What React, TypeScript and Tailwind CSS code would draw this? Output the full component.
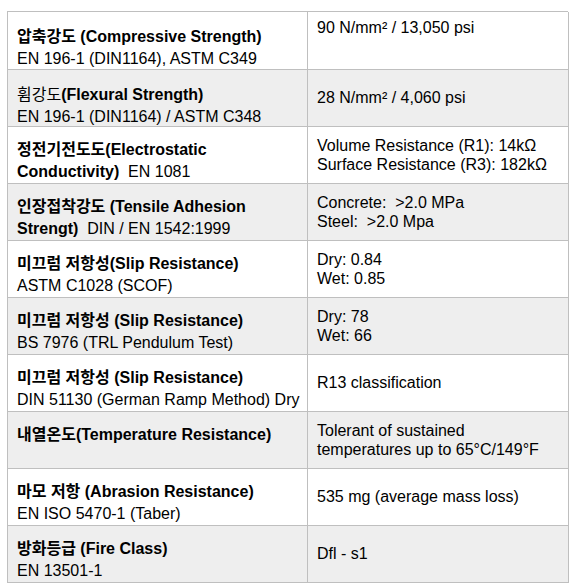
type Row = {
	ko: string;
	koBold: boolean;
	en: string;
	std: string;
	stdInline?: boolean;
	values: string[];
	top?: boolean;
	pad: string;
	height: string;
};

const rows: Row[] = [
	{
		ko: "압축강도 ",
		koBold: true,
		en: "(Compressive Strength)",
		std: "EN 196-1 (DIN1164), ASTM C349",
		values: ["90 N/mm² / 13,050 psi"],
		top: true,
		pad: "pt-[14px]",
		height: "h-[58px]",
	},
	{
		ko: "휨강도",
		koBold: false,
		en: "(Flexural Strength)",
		std: "EN 196-1 (DIN1164) / ASTM C348",
		values: ["28 N/mm² / 4,060 psi"],
		pad: "pt-[14px]",
		height: "h-[57px]",
	},
	{
		ko: "정전기전도도",
		koBold: true,
		en: "(Electrostatic Conductivity)",
		std: "\u00a0 EN 1081",
		stdInline: true,
		values: ["Volume Resistance (R1): 14kΩ", "Surface Resistance (R3): 182kΩ"],
		pad: "pt-3",
		height: "h-[57px]",
	},
	{
		ko: "인장접착강도 ",
		koBold: true,
		en: "(Tensile Adhesion Strengt)",
		std: "\u00a0 DIN / EN 1542:1999",
		stdInline: true,
		values: ["Concrete:  >2.0 MPa", "Steel:  >2.0 Mpa"],
		pad: "pt-3",
		height: "h-[57px]",
	},
	{
		ko: "미끄럼 저항성",
		koBold: true,
		en: "(Slip Resistance)",
		std: "ASTM C1028 (SCOF)",
		values: ["Dry: 0.84", "Wet: 0.85"],
		pad: "pt-3",
		height: "h-[57px]",
	},
	{
		ko: "미끄럼 저항성 ",
		koBold: true,
		en: "(Slip Resistance)",
		std: "BS 7976 (TRL Pendulum Test)",
		values: ["Dry: 78", "Wet: 66"],
		pad: "pt-3",
		height: "h-[57px]",
	},
	{
		ko: "미끄럼 저항성 ",
		koBold: true,
		en: "(Slip Resistance)",
		std: "DIN 51130 (German Ramp Method) Dry",
		values: ["R13 classification"],
		pad: "pt-3",
		height: "h-[57px]",
	},
	{
		ko: "내열온도",
		koBold: true,
		en: "(Temperature Resistance)",
		std: "",
		values: ["Tolerant of sustained", "temperatures up to 65°C/149°F"],
		pad: "pt-3",
		height: "h-[57px]",
	},
	{
		ko: "마모 저항 ",
		koBold: true,
		en: "(Abrasion Resistance)",
		std: "EN ISO 5470-1 (Taber)",
		values: ["535 mg (average mass loss)"],
		pad: "pt-3",
		height: "h-[57px]",
	},
	{
		ko: "방화등급 ",
		koBold: true,
		en: "(Fire Class)",
		std: "EN 13501-1",
		values: ["Dfl - s1"],
		pad: "pt-3",
		height: "h-[57px]",
	},
];

export default function App() {
	return (
		<div
			className="h-[588px] w-[578px] overflow-hidden bg-white pl-[7px] pt-[11px] text-[16px] text-black"
			style={{ fontFamily: '"Liberation Sans", Arial, "Noto Sans CJK KR", sans-serif' }}
		>
			<div className="grid w-[561px] grid-cols-[300px_261px] border-l border-t border-[#bfbfbf]">
				{rows.map((r, i) => (
					<div key={i} className={`contents ${i % 2 === 1 ? "[&>div]:bg-[#eeeeee]" : ""}`}>
						<div
							className={`${r.height} ${r.pad} overflow-visible whitespace-nowrap border-b border-r border-[#bfbfbf] pl-[9px] pr-1 leading-[22px]`}
						>
							{r.stdInline ? (
								<>
									<div className="font-bold">
										{r.ko}
										{r.en.split(" ").slice(0, -1).join(" ")}
									</div>
									<div>
										<span className="font-bold">{r.en.split(" ").slice(-1)[0]}</span>
										{r.std}
									</div>
								</>
							) : (
								<>
									<div className="font-bold">
										<span className={r.koBold ? "font-bold" : "font-normal"}>{r.ko}</span>
										{r.en}
									</div>
									{r.std && <div>{r.std}</div>}
								</>
							)}
						</div>
						<div
							className={`${r.height} flex flex-col border-b border-r border-[#bfbfbf] pl-[9px] leading-[19.5px] ${
								r.top ? "justify-start pt-[6px]" : "justify-center"
							}`}
						>
							{r.values.map((v) => (
								<div key={v} className="whitespace-pre">
									{v}
								</div>
							))}
						</div>
					</div>
				))}
			</div>
		</div>
	);
}
